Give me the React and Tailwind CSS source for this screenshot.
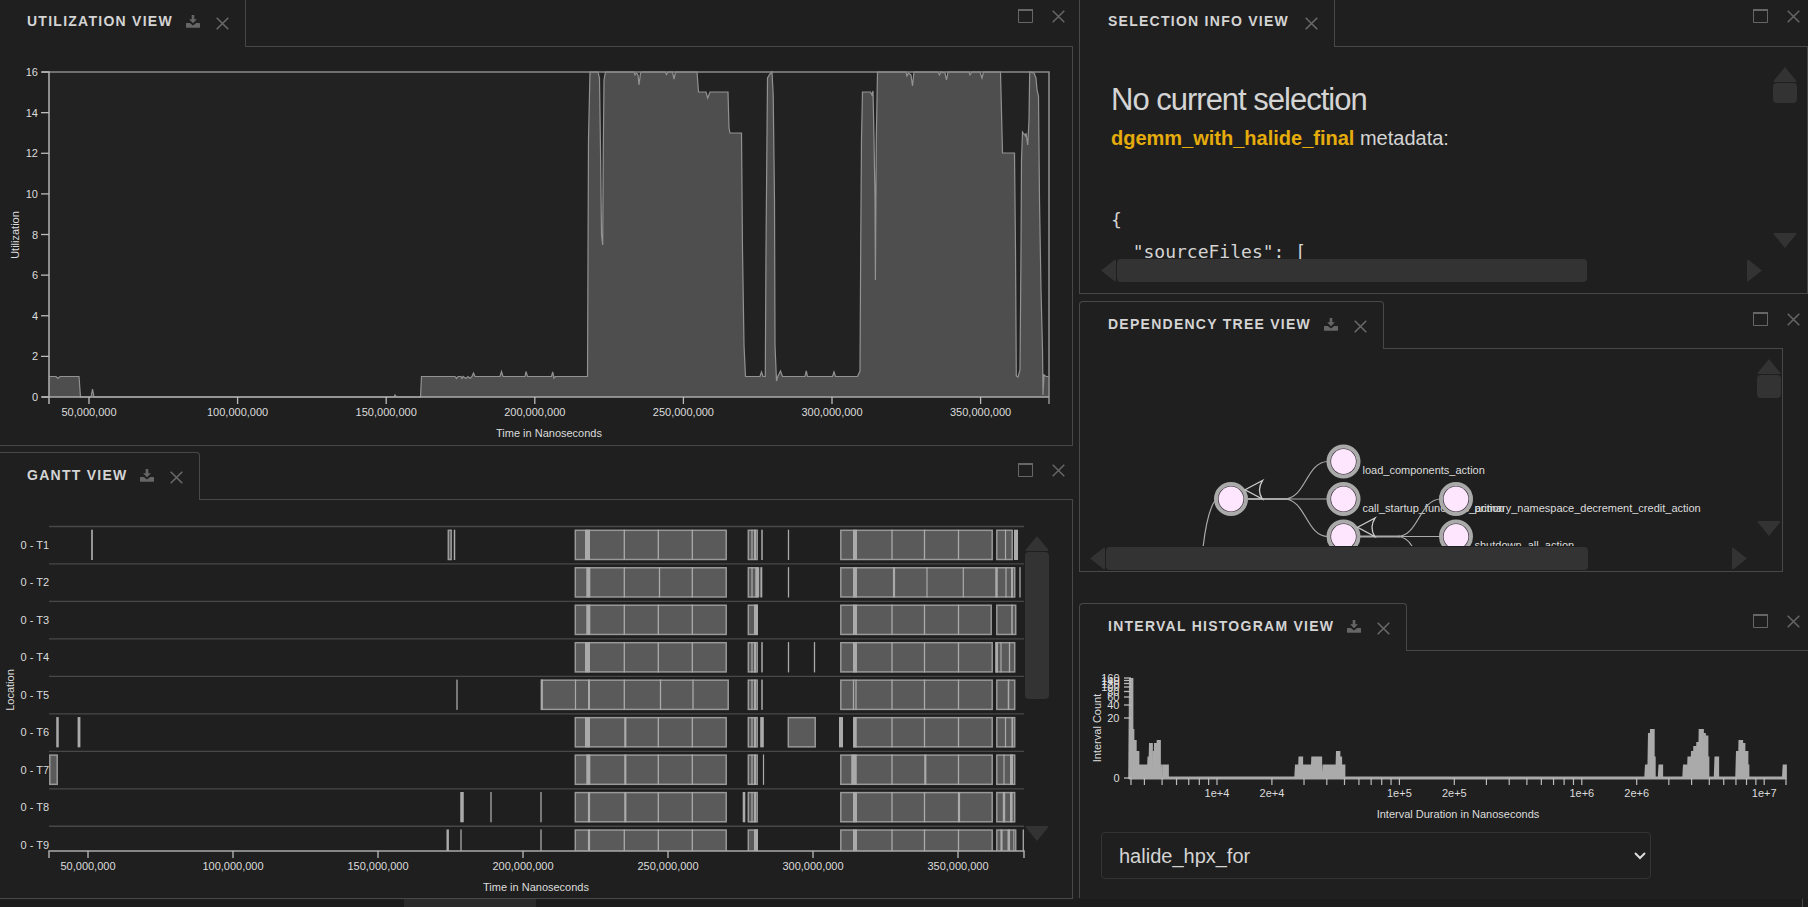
import React from "react";

const FONT = "font-['Liberation_Sans',Arial,sans-serif]";

/* ---------- icons ---------- */

function DownloadIcon() {
  return (
    <svg viewBox="0 0 14 13" className="h-[13px] w-[14px]" fill="currentColor" aria-hidden="true">
      <path d="M5.7 0h2.6v4.2h2.6L7 8.2 3.1 4.2h2.6z" />
      <path d="M0.6 8h3.2L7 10.4l3.200-2.4h3.2a.6.6 0 0 1 .6.6v3.600a.6.6 0 0 1-.6.6H.6a.6.6 0 0 1-.6-.6V8.600a.6.6 0 0 1 .6-.6z" />
    </svg>
  );
}

function CloseIcon() {
  return (
    <svg viewBox="0 0 13 13" className="size-[13px]" fill="none" stroke="currentColor" strokeWidth="1.5" aria-hidden="true">
      <path d="M0.7 0.7 12.3 12.3M12.3 0.7 0.7 12.3" />
    </svg>
  );
}

function MaximizeIcon() {
  return (
    <svg viewBox="0 0 15 14" className="h-[14px] w-[15px]" fill="none" stroke="currentColor" aria-hidden="true">
      <path d="M0.5 1v12.5h14V1" />
      <path d="M0 1h15" strokeWidth="2" />
    </svg>
  );
}

/* ---------- panel chrome ---------- */

function Panel({ title, download = true, first = false, left = false, box = "", children }) {
  return (
    <section className="flex flex-col">
      <header className={`flex items-start justify-between ${first ? "h-[46px]" : "h-[47px]"}`}>
        <div
          className={`relative z-10 flex items-start border-r border-[#484848] bg-[#1f1f1f] pr-4 ${
            first ? "h-[47px] pt-[10px]" : "h-[48px] rounded-tr border-t pt-[11px]"
          } ${left ? "border-l pl-7" : "pl-[27px]"} ${left && !first ? "rounded-tl" : ""}`}
        >
          <h2 className="text-sm leading-[22px] font-bold tracking-[0.09em] whitespace-nowrap text-[#d4d4d4] uppercase">{title}</h2>
          {download && (
            <button type="button" aria-label={`Download ${title}`} className="mt-[5px] ml-[13px] text-[#666]">
              <DownloadIcon />
            </button>
          )}
          <button type="button" aria-label={`Close ${title} tab`} className="mt-[7px] ml-4 text-[#6a6a6a]">
            <CloseIcon />
          </button>
        </div>
        <div className={`flex gap-[19px] pr-2 text-[#666] ${first ? "pt-[9px]" : "pt-[11px]"}`}>
          <button type="button" aria-label={`Maximize ${title}`}>
            <MaximizeIcon />
          </button>
          <button type="button" aria-label={`Close ${title}`}>
            <CloseIcon />
          </button>
        </div>
      </header>
      <div className={`border-[#484848] border-t ${left ? "border-l" : ""} ${box}`}>{children}</div>
    </section>
  );
}

function VScroll({ thumb, className }) {
  return (
    <div className={`flex w-6 flex-col text-[#333] ${className}`}>
      <svg viewBox="0 0 24 15" className="h-[15px] w-6" fill="currentColor">
        <path d="M12 0 23.5 14a1 1 0 0 1-1 1h-21a1 1 0 0 1-1-1z" />
      </svg>
      <div className={`mt-px w-full rounded bg-[#333] ${thumb}`} />
      <svg viewBox="0 0 24 15" className="mt-auto h-[15px] w-6" fill="currentColor">
        <path d="M12 15 23.5 1a1 1 0 0 0-1-1h-21a1 1 0 0 0-1 1z" />
      </svg>
    </div>
  );
}

function HScroll({ thumb, className }) {
  return (
    <div className={`flex h-[23px] text-[#333] ${className}`}>
      <svg viewBox="0 0 15 23" className="h-[23px] w-[15px]" fill="currentColor">
        <path d="M0 11.5 14 .5a1 1 0 0 1 1 1v20a1 1 0 0 1-1 1z" />
      </svg>
      <div className={`ml-px h-full rounded bg-[#333] ${thumb}`} />
      <svg viewBox="0 0 15 23" className="ml-auto h-[23px] w-[15px]" fill="currentColor">
        <path d="M15 11.5 1 .5a1 1 0 0 0-1 1v20a1 1 0 0 0 1 1z" />
      </svg>
    </div>
  );
}

/* ---------- utilization ---------- */

const TIMES = [50, 100, 150, 200, 250, 300, 350];

const UTIL =
  "49,376.5 56,376.5 58,378.5 60,376.5 79,376.5 80.5,397 91,397 92.5,389 94,397 394,397 395,395 396.5,397 420.5,397 421.5,376.5 " +
  "455,376.5 456.5,378.5 458,376.5 461,376.5 462,378.5 463,376.5 466,378.5 468,376.5 470,378.5 472,376.5 473.5,373 475,376.5 500,376.5 501.5,371.5 503,376.5 525,376.5 526,371.5 527.5,376.5 " +
  "551.5,376.5 552.7,372 554,378 555.5,376.5 587.5,376.5 588.5,139 590,72 598,72 599.5,78 600.5,150 601.5,235 602.7,245 603.3,150 604,80 605.5,72 " +
  "634,72 635,75 636.5,73 638,75 639,85 640.5,73 642,72 665,72 666.5,74.5 668,72 672.5,72 674,79 675.5,72 697,72 698.5,92 706,92 707.7,98 710,92 728,92 " +
  "729,128 730,133 741.5,133 742.5,250 744,345 745.5,376.5 760,376.5 761.5,372 763,376.5 765.3,376.5 766,250 767.5,78 770,74 772,72 773.2,95 774.5,200 " +
  "775,345 776.5,381 778,376 780.5,371 782.5,376.5 805,376.5 806.3,371 807.5,376.5 832.5,376.5 834,372 835.5,376.5 857.5,376.5 860,371 860.7,250 861.5,139 " +
  "862.5,92 870.5,92 872,95 873,91 874,139 875,200 875.4,280 876.3,139 877.5,72 906,72 907,76 908.5,73 911,75 912.5,86 914,72 938,72 939.5,75 941,72 945,73 " +
  "946.5,80 948,72 969,72 970,75 972,72 980,72 982,78 983.5,72 1000.5,72 1002.5,153 1014.5,153 1015.5,250 1016.3,376 1018,377 1020,370 1021,250 1021.5,160 " +
  "1022.5,132 1024,134 1025.5,136 1026,133 1027.7,145 1029,120 1029.7,72 1034,73 1036,78 1037,90 1038.5,96 1039.5,200 1041,290 1042.5,350 1043,395 1044,375 1046,376.5 1049,376.5";

function UtilizationChart() {
  return (
    <svg viewBox="0 47 1072 398" className="block w-full" fontSize="11" fill="#dcdcdc" role="img" aria-label="Utilization over time">
      <rect x="49" y="72" width="1000" height="325" fill="#222" />
      <polygon points={`49,397 ${UTIL} 1049,397`} fill="#4e4e4e" />
      <polyline points={UTIL} fill="none" stroke="#929292" strokeWidth="1.2" />
      <path d="M49 72H1049V404" fill="none" stroke="#8a8a8a" strokeWidth="1.6" />
      <path d="M42 72H49V404M42 397H1049" fill="none" stroke="#aaa" strokeWidth="1.6" />
      {[0, 2, 4, 6, 8, 10, 12, 14, 16].map((v) => {
        const y = 397 - v * 20.31;
        return (
          <g key={v}>
            <path d={`M41 ${y}h8`} stroke="#bbb" strokeWidth="1.3" />
            <text x="38" y={y + 4} textAnchor="end">{v}</text>
          </g>
        );
      })}
      {TIMES.map((t, i) => (
        <g key={t}>
          <path d={`M${89 + i * 148.6} 397v7`} stroke="#bbb" strokeWidth="1.3" />
          <text x={89 + i * 148.6} y="416" textAnchor="middle">{`${t},000,000`}</text>
        </g>
      ))}
      <text x="549" y="437" textAnchor="middle">Time in Nanoseconds</text>
      <text transform="translate(19 235) rotate(-90)" textAnchor="middle">Utilization</text>
    </svg>
  );
}

/* ---------- gantt ---------- */

const A = [575, 726.5];
const B = [748, 757.5];
const C = [840.5, 992.5];
const T = [996.5, 1015];
const A_DIV = [[624.3, 1.3], [658.3, 1.3], [692.3, 1.3]];
const B_DIV = [[752, 1.2], [755, 2]];
const C_DIV = [[892, 1.3], [924.5, 1.3], [958.5, 1.3]];

const ROWS = [
  {
    boxes: [[448, 451.5], A, B, C, [996.5, 1012.5]],
    marks: [[92, 1.7], [454.5, 1.5], [587.5, 5], ...A_DIV, ...B_DIV, [762, 1.5], [788.5, 1.3], [855, 4], ...C_DIV, [1005.5, 1.2], [1016, 4]],
  },
  {
    boxes: [A, B, [840.5, 1015]],
    marks: [[588.3, 4], [624.3, 1.3], [659.5, 1.3], [692.3, 1.3], [752, 1.2], [757.3, 4], [761.3, 2], [788.5, 1.3], [855, 4], [894, 2.2], [927, 1.2], [963.3, 1.2], [996.5, 2.5], [1006, 1.2], [1012, 2]],
    end: [1020, 1.3],
  },
  {
    boxes: [A, B, [840.5, 991.5], [996.5, 1016]],
    marks: [[588.3, 4], ...A_DIV, [756, 4], [855, 4], ...C_DIV, [1012, 1.5]],
  },
  {
    boxes: [A, B, C, [995.5, 1015]],
    marks: [[587.5, 5], ...A_DIV, ...B_DIV, [762, 1.5], [788.5, 1.3], [814.5, 1.3], [855, 4], ...C_DIV, [997, 2], [1001, 1.2], [1009.5, 1.3]],
  },
  {
    boxes: [[541, 728.5], B, C, T],
    marks: [[457, 1.3], [542, 1.8], [575.5, 1.2], [589, 2], [624.3, 1.3], [660.5, 1.3], [693, 1.3], ...B_DIV, [762, 1.5], [853.5, 1.3], [856, 1.3], ...C_DIV, [1008.5, 1.5]],
  },
  {
    boxes: [A, B, [788, 815.5], [853.5, 992.5], T],
    marks: [[57.5, 2.5], [79, 2.8], [587.5, 5], [625.3, 2.2], [658.3, 1.3], [692.3, 1.3], ...B_DIV, [762, 3.6], [841, 4], [855, 3.5], ...C_DIV, [1005.5, 1.2], [1012.3, 1.8]],
  },
  {
    boxes: [[49.5, 57.5], A, B, C, T],
    marks: [[588.3, 4], [625.3, 2.2], [658.3, 1.3], [692.3, 1.3], ...B_DIV, [763.5, 1.2], [854, 5.5], [892, 1.3], [925.3, 2.2], [958.5, 1.3], [1004, 1.2], [1011.5, 3]],
  },
  {
    boxes: [A, B, C, T],
    marks: [[462, 3.5], [491, 1.3], [541, 1.3], [589, 2.2], [625.3, 2.2], [658.3, 1.3], [692.3, 1.3], [744, 2.6], ...B_DIV, [855, 4], [892, 1.3], [924.5, 1.3], [959, 2.2], [1004, 2.4], [1011.3, 2.6]],
  },
  {
    boxes: [A, B, C, [996.5, 1016]],
    marks: [[447.7, 2.4], [461, 1.3], [541, 1.3], [589, 2.2], ...A_DIV, [756, 4], [855, 4], ...C_DIV, [1001.5, 2.2], [1008.8, 2.6], [1013.8, 1]],
    end: [1023.3, 1.3],
  },
];

function GanttChart() {
  return (
    <svg viewBox="0 500 1025 398" className="block min-w-0 flex-1" fontSize="11" fill="#dcdcdc" role="img" aria-label="Gantt chart of thread locations">
      <clipPath id="gantt-rows">
        <rect x="0" y="500" width="1025" height="351" />
      </clipPath>
      <g clipPath="url(#gantt-rows)">
        {ROWS.map((row, r) => {
          const y = 526.5 + r * 37.47;
          const marks = row.end ? [...row.marks, row.end] : row.marks;
          return (
            <g key={r}>
              <path d={`M49 ${y}H1024`} stroke="#484848" strokeWidth="1.3" />
              <text x="49" y={y + 22.5} textAnchor="end">{`0 - T${r + 1}`}</text>
              {row.boxes.map(([a, b], i) => (
                <rect key={i} x={a + 0.3} y={y + 3.8} width={b - a - 0.6} height="29.2" fill="#5a5a5a" stroke="#999" strokeWidth="1.5" />
              ))}
              {marks.map(([x, w], i) => (
                <rect key={i} x={x - w / 2} y={y + 3.2} width={w} height="30.3" fill="#aaa" />
              ))}
            </g>
          );
        })}
      </g>
      <path d="M49 858V851H1024V858" fill="none" stroke="#aaa" strokeWidth="1.5" />
      {TIMES.map((t, i) => (
        <g key={t}>
          <path d={`M${88 + i * 145} 851v7`} stroke="#bbb" strokeWidth="1.3" />
          <text x={88 + i * 145} y="870" textAnchor="middle">{`${t},000,000`}</text>
        </g>
      ))}
      <text x="536" y="891" textAnchor="middle">Time in Nanoseconds</text>
      <text transform="translate(14 690) rotate(-90)" textAnchor="middle">Location</text>
    </svg>
  );
}

/* ---------- dependency tree ---------- */

function TreeNode({ x, y }) {
  return (
    <g>
      <circle cx={x} cy={y} r="15" fill="#332a33" stroke="#aaa" strokeWidth="4" />
      <circle cx={x} cy={y} r="12.4" fill="#ffe6ff" />
    </g>
  );
}

function DependencyTree() {
  return (
    <svg viewBox="1080 349 677 197" className="block w-full" fontSize="11" fill="#dcdcdc" role="img" aria-label="Dependency tree">
      <g fill="none" stroke="#aaa" strokeWidth="1.2">
        <path d="M1216 499C1209 508 1205 530 1203 548" />
        <path d="M1247 499H1288" strokeWidth="1.8" />
        <path d="M1284 499C1306 499 1306 461.5 1328 461.5M1284 499H1328M1284 499C1306 499 1306 536.5 1328 536.5" />
        <path d="M1360 536.5H1400" strokeWidth="1.8" />
        <path d="M1397 536.5H1441M1397 536.5C1406 536.5 1410 542 1413 548" />
      </g>
      <text x="1362.5" y="474">load_components_action</text>
      <text x="1362.5" y="512">call_startup_functions_action</text>
      <text x="1474.5" y="512">primary_namespace_decrement_credit_action</text>
      <text x="1474.5" y="549">shutdown_all_action</text>
      <TreeNode x={1231} y={499} />
      <TreeNode x={1343.5} y={461.5} />
      <TreeNode x={1343.5} y={499} />
      <TreeNode x={1343.5} y={536.5} />
      <TreeNode x={1456} y={499} />
      <TreeNode x={1456} y={536.5} />
      <path d="M1397 536.5C1419 536.5 1419 499 1441 499" fill="none" stroke="#aaa" strokeWidth="1.2" />
      <g fill="#222" stroke="#ccc" strokeWidth="1.3">
        <path d="M1245 489.8 1262.6 480.4Q1256.500 490 1262.300 499Z" />
        <path d="M1357.500 527.3 1375.1 517.9Q1369 527.5 1374.8 536.500Z" />
      </g>
    </svg>
  );
}

/* ---------- histogram ---------- */

const BARS = [
  [1129, 1133, 677], [1133, 1134, 728], [1133, 1136.3, 739], [1136, 1139, 750], [1139, 1148, 763.5], [1147.5, 1149, 755.5],
  [1149, 1152.5, 742], [1152.5, 1154, 750], [1154, 1157, 742], [1156.7, 1160.5, 739], [1160.5, 1162.5, 763.5], [1163, 1168.5, 763.5],
  [1295, 1298.5, 763.5], [1298.5, 1302.7, 755.5], [1302.7, 1311.5, 763.5], [1311.3, 1317, 755.5], [1317, 1321.7, 755.5],
  [1322.5, 1325, 763.5], [1325, 1336, 763.5], [1336, 1340, 750], [1340, 1341.7, 755.5], [1341.7, 1345, 763.5],
  [1645, 1648, 763.5], [1648, 1650.5, 732], [1650, 1654.3, 728], [1654, 1655.3, 755.5], [1658.5, 1662.7, 763.5],
  [1683, 1687.5, 763.5], [1687.5, 1691, 755.5], [1691, 1693.5, 750], [1693.3, 1696.5, 745], [1696.3, 1699, 741],
  [1698.7, 1703.5, 728], [1703.3, 1705.5, 732], [1705.3, 1708, 734.5], [1707.7, 1709, 755.5], [1714.5, 1718.7, 755.5],
  [1736, 1738.7, 750], [1738.5, 1742.7, 739], [1742.5, 1745, 742], [1744.7, 1748, 750], [1747.5, 1749, 763.5], [1782.7, 1786.5, 763.5],
];

const COUNTS = [[0, 777], [20, 717], [40, 704], [60, 696], [80, 690.5], [100, 686], [120, 682.5], [140, 679.5], [160, 677]];
const LABELED = { 10000: "1e+4", 20000: "2e+4", 100000: "1e+5", 200000: "2e+5", 1000000: "1e+6", 2000000: "2e+6", 10000000: "1e+7" };
const LOG_TICKS = [3, 4, 5, 6].flatMap((e) => [1, 2, 3, 4, 5, 6, 7, 8, 9].map((m) => m * 10 ** e)).filter((v) => v >= 4000).concat(10000000);

function Histogram() {
  return (
    <svg viewBox="1080 650 728 172" className="block w-full" fontSize="11" fill="#dcdcdc" role="img" aria-label="Interval histogram">
      {BARS.map(([a, b, y], i) => (
        <path key={i} d={`M${a - 0.8} 778L${a} ${y}H${b + 0.4}V778Z`} fill="#aaa" />
      ))}
      <path d="M1129 777H1786" stroke="#aaa" strokeWidth="3" />
      <path d="M1131 677V784M1786 777V784" stroke="#aaa" strokeWidth="1.4" />
      {COUNTS.map(([v, y]) => (
        <g key={v}>
          <path d={`M1124 ${y}h7`} stroke="#bbb" strokeWidth="1.3" />
          <text x="1119.5" y={y + 4} textAnchor="end">{v}</text>
        </g>
      ))}
      {LOG_TICKS.map((v) => {
        const x = 1217 + (Math.log10(v) - 4) * 182.4;
        return (
          <g key={v}>
            <path d={`M${x} 777v7`} stroke="#bbb" strokeWidth="1.2" />
            {LABELED[v] && <text x={x} y="796" textAnchor="middle">{LABELED[v]}</text>}
          </g>
        );
      })}
      <text x="1458" y="817" textAnchor="middle">Interval Duration in Nanoseconds</text>
      <text transform="translate(1101 727) rotate(-90)" textAnchor="middle">Interval Count</text>
    </svg>
  );
}

/* ---------- page ---------- */

export default function App() {
  return (
    <div className={`${FONT} flex min-h-screen flex-col bg-[#1f1f1f] text-[#d4d4d4]`}>
      <main className="flex flex-1 gap-[6px]">
        <div className="flex min-w-0 flex-[1073_1_0%] flex-col gap-[6px]">
          <Panel title="Utilization View" first box="border-r border-b">
            <UtilizationChart />
          </Panel>
          <Panel title="Gantt View" box="border-r border-b">
            <div className="flex items-start pr-[23px]">
              <GanttChart />
              <VScroll thumb="h-[147px]" className="mt-9 h-[305px]" />
            </div>
          </Panel>
        </div>

        <div className="flex min-w-0 flex-[729_1_0%] flex-col">
          <Panel title="Selection Info View" download={false} first left box="border-r border-b pb-[11px]">
            <div className="flex h-[212px] justify-between overflow-hidden">
              <div className="pt-[35px] pl-[31px]">
                <h1 className="text-[31px] leading-9 tracking-[-1px]">No current selection</h1>
                <p className="mt-2 text-xl leading-6">
                  <strong className="text-[#e5ac0c]">dgemm_with_halide_final</strong> metadata:
                </p>
                <pre className="mt-[54px] font-['DejaVu_Sans_Mono',monospace] text-lg leading-8">{`{\n  "sourceFiles": [`}</pre>
              </div>
              <VScroll thumb="h-5" className="mt-5 mr-[10px] h-[181px]" />
            </div>
            <HScroll thumb="w-[470px]" className="mr-[45px] ml-[21px]" />
          </Panel>

          <div className="mt-[7px]">
            <Panel title="Dependency Tree View" left box="mr-[25px] border-r border-b pb-px">
              <div className="flex items-start">
                <div className="min-w-0 flex-1 pb-px">
                  <DependencyTree />
                </div>
                <VScroll thumb="h-[23px]" className="mt-[10px] mr-px h-[177px]" />
              </div>
              <HScroll thumb="w-[482px]" className="mr-[35px] ml-[10px]" />
            </Panel>
          </div>

          <div className="mt-[31px] flex flex-col">
            <Panel title="Interval Histogram View" left box="pb-[19px]">
              <Histogram />
              <div className="relative mt-[9px] ml-[21px] w-[550px] max-w-full">
                <label htmlFor="primitive" className="sr-only">Primitive</label>
                <select
                  id="primitive"
                  defaultValue="halide_hpx_for"
                  className="h-[47px] w-full appearance-none rounded border border-[#333] bg-[#1f1f1f] px-[17px] text-xl text-[#d4d4d4]"
                >
                  <option>halide_hpx_for</option>
                </select>
                <svg viewBox="0 0 12 8" className="pointer-events-none absolute top-5 right-[5px] h-2 w-3" fill="none" stroke="#ddd" strokeWidth="2">
                  <path d="M1 1l5 5 5-5" />
                </svg>
              </div>
            </Panel>
          </div>
        </div>
      </main>
      <footer className="flex h-2 justify-between bg-[#1d1c1c]">
        <div className="ml-[404px] w-[132px] bg-[#2b2b2b]" />
        <div className="mr-[5px] border-r border-[#484848]" />
      </footer>
    </div>
  );
}
